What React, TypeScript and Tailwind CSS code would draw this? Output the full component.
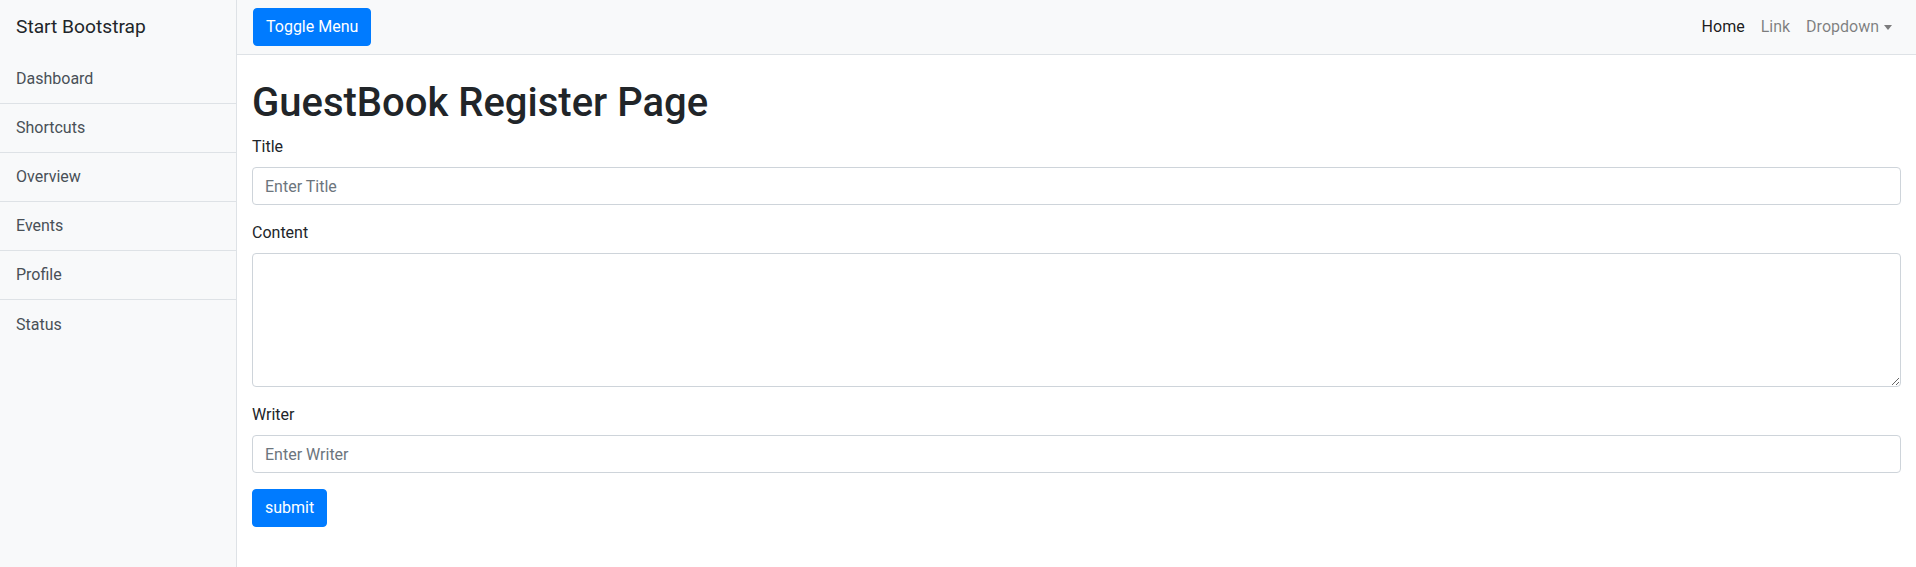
import { useState } from "react";

const menu = ["Dashboard", "Shortcuts", "Overview", "Events", "Profile", "Status"];

function Sidebar() {
  return (
    <aside className="w-[237px] shrink-0 bg-[#f8f9fa] border-r border-[#dee2e6]">
      <div className="h-[55px] flex items-center pl-[16px] text-[19.2px] text-[#212529]">Start Bootstrap</div>
      <div>
        {menu.map((m, i) => (
          <a
            key={m}
            href="#"
            className={`flex items-center h-[49px] pl-[16px] text-[16px] text-[#495057] ${i < menu.length - 1 ? "border-b border-[#dee2e6]" : ""}`}
          >
            {m}
          </a>
        ))}
      </div>
    </aside>
  );
}

function TopNav() {
  return (
    <nav className="h-[55px] shrink-0 bg-[#f8f9fa] border-b border-[#dee2e6] flex items-center justify-between px-4">
      <button className="h-[38px] px-3 rounded-[4px] bg-[#007bff] text-white text-[16px] border border-[#007bff]">Toggle Menu</button>
      <ul className="flex items-center text-[16px]">
        <li><a href="#" className="px-2 text-black/90">Home</a></li>
        <li><a href="#" className="px-2 text-black/50">Link</a></li>
        <li>
          <a href="#" className="px-2 text-black/50 inline-flex items-center">
            Dropdown
            <span className="ml-[5px] w-0 h-0 border-t-[5px] border-t-black/50 border-x-[4.5px] border-x-transparent" />
          </a>
        </li>
      </ul>
    </nav>
  );
}

export default function App() {
  const [title, setTitle] = useState("");
  const [content, setContent] = useState("");
  const [writer, setWriter] = useState("");

  return (
    <div className="flex min-h-[567px] bg-white text-[#212529] font-['Roboto','Liberation_Sans',sans-serif]">
      <Sidebar />
      <div className="flex-1 flex flex-col min-w-0">
        <TopNav />
        <div className="px-[15px]">
          <h1 className="mt-6 mb-2 text-[40px] leading-[1.2] font-medium">GuestBook Register Page</h1>
          <form onSubmit={(e) => e.preventDefault()}>
            <div className="mb-4">
              <label className="block mb-2 text-[16px] leading-6">Title</label>
              <input
                value={title}
                onChange={(e) => setTitle(e.target.value)}
                placeholder="Enter Title"
                className="block w-full h-[38px] px-3 border border-[#ced4da] rounded-[4px] text-[16px] placeholder:text-[#6c757d] outline-none"
              />
            </div>
            <div className="mb-4">
              <label className="block mb-2 text-[16px] leading-6">Content</label>
              <textarea
                rows={5}
                value={content}
                onChange={(e) => setContent(e.target.value)}
                className="block w-full h-[134px] px-3 py-1.5 border border-[#ced4da] rounded-[4px] text-[16px] leading-6 outline-none"
              />
            </div>
            <div className="mb-4">
              <label className="block mb-2 text-[16px] leading-6">Writer</label>
              <input
                value={writer}
                onChange={(e) => setWriter(e.target.value)}
                placeholder="Enter Writer"
                className="block w-full h-[38px] px-3 border border-[#ced4da] rounded-[4px] text-[16px] placeholder:text-[#6c757d] outline-none"
              />
            </div>
            <button type="submit" className="h-[38px] px-3 rounded-[4px] bg-[#007bff] text-white text-[16px] border border-[#007bff]">submit</button>
          </form>
        </div>
      </div>
    </div>
  );
}
